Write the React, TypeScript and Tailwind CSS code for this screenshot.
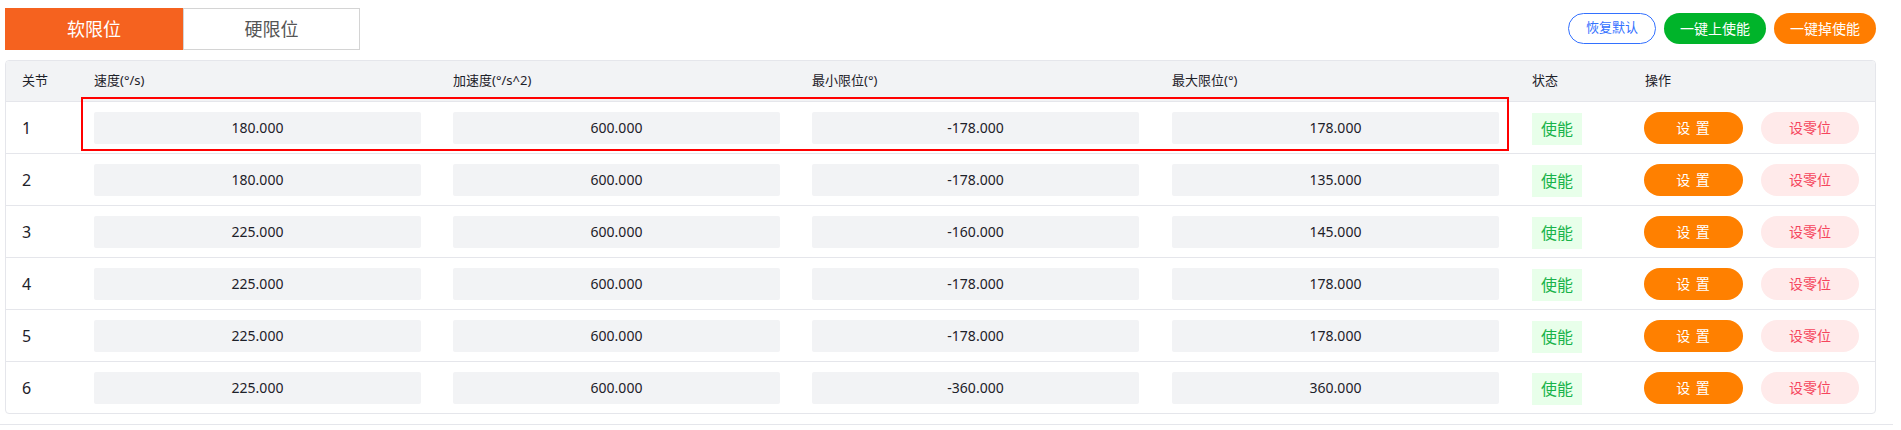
import { useState } from "react";

type Joint = {
  id: number;
  speed: string;
  acc: string;
  min: string;
  max: string;
};

const joints: Joint[] = [
  { id: 1, speed: "180.000", acc: "600.000", min: "-178.000", max: "178.000" },
  { id: 2, speed: "180.000", acc: "600.000", min: "-178.000", max: "135.000" },
  { id: 3, speed: "225.000", acc: "600.000", min: "-160.000", max: "145.000" },
  { id: 4, speed: "225.000", acc: "600.000", min: "-178.000", max: "178.000" },
  { id: 5, speed: "225.000", acc: "600.000", min: "-178.000", max: "178.000" },
  { id: 6, speed: "225.000", acc: "600.000", min: "-360.000", max: "360.000" },
];

const font = { fontFamily: '"Noto Sans", "Noto Sans CJK SC", sans-serif' };

const Field = ({ value }: { value: string }) => (
  <div className="w-[327px] h-[32px] rounded-[2px] bg-[#f2f3f5] flex items-center justify-center text-[14px] text-[#1d2129]">
    {value}
  </div>
);

const App = () => {
  const [tab, setTab] = useState<"soft" | "hard">("soft");

  return (
    <div className="bg-white w-[1901px] h-[430px] overflow-hidden" style={font}>
      <div className="pl-[5px] w-[1876px]">
        {/* Top bar */}
        <div className="pt-[8px] flex items-center justify-between">
          <div className="flex h-[42px]">
            <button
              onClick={() => setTab("soft")}
              className={
                tab === "soft"
                  ? "w-[178px] h-full bg-[#f5621f] text-white text-[18px]"
                  : "w-[178px] h-full bg-white border border-[#d4d4d4] text-[#555] text-[18px]"
              }
            >
              软限位
            </button>
            <button
              onClick={() => setTab("hard")}
              className={
                tab === "hard"
                  ? "w-[177px] h-full bg-[#f5621f] text-white text-[18px]"
                  : "w-[177px] h-full bg-white border border-[#d4d4d4] text-[#555] text-[18px]"
              }
            >
              硬限位
            </button>
          </div>
          <div className="flex items-center gap-[8px] -mt-[2px]">
            <button className="w-[88px] h-[31px] rounded-full border border-[#3371ff] text-[#3371ff] text-[13px]">
              恢复默认
            </button>
            <button className="w-[102px] h-[31px] rounded-full bg-[#00b42a] text-white text-[14px]">
              一键上使能
            </button>
            <button className="w-[102px] h-[31px] rounded-full bg-[#ff7d00] text-white text-[14px]">
              一键掉使能
            </button>
          </div>
        </div>

        {/* Table */}
        <div className="mt-[10px] border border-[#e5e6eb] rounded-[4px] text-[#1d2129]">
          <div className="flex h-[41px] items-center bg-[#f2f3f5] border-b border-[#e5e6eb] text-[13px] rounded-t-[4px]">
            <div className="w-[76px] pl-[16px]">关节</div>
            <div className="w-[359px] pl-[12px]">速度(°/s)</div>
            <div className="w-[359px] pl-[12px]">加速度(°/s^2)</div>
            <div className="w-[360px] pl-[12px]">最小限位(°)</div>
            <div className="w-[360px] pl-[12px]">最大限位(°)</div>
            <div className="w-[113px] pl-[12px]">状态</div>
            <div className="flex-1 pl-[12px]">操作</div>
          </div>

          {joints.map((j, i) => (
            <div
              key={j.id}
              className={
                i === joints.length - 1
                  ? "relative flex h-[51px] items-center"
                  : "relative flex h-[52px] items-center border-b border-[#e5e6eb]"
              }
            >
              {i === 0 && (
                <div className="absolute -top-[5px] left-[75px] w-[1428px] h-[54px] border-2 border-[#ff0000] pointer-events-none" />
              )}
              <div className="w-[76px] pl-[16px] text-[16px]">{j.id}</div>
              <div className="w-[359px] pl-[12px]">
                <Field value={j.speed} />
              </div>
              <div className="w-[359px] pl-[12px]">
                <Field value={j.acc} />
              </div>
              <div className="w-[360px] pl-[12px]">
                <Field value={j.min} />
              </div>
              <div className="w-[360px] pl-[12px]">
                <Field value={j.max} />
              </div>
              <div className="w-[113px] pl-[12px]">
                <span className="inline-flex w-[50px] h-[32px] mt-[2px] items-center justify-center bg-[#e8ffea] text-[#19b34a] text-[16px]">
                  使能
                </span>
              </div>
              <div className="flex-1 pl-[11px] flex items-center gap-[18px]">
                <button className="w-[99px] h-[32px] rounded-full bg-[#ff8000] text-white text-[14px] tracking-[1px]">
                  设 置
                </button>
                <button className="w-[98px] h-[32px] rounded-full bg-[#ffeaea] text-[#f5455c] text-[14px]">
                  设零位
                </button>
              </div>
            </div>
          ))}
        </div>
      </div>
      <div className="mt-[10px] w-[1893px] h-px bg-[#e5e6eb]" />
    </div>
  );
};

export default App;
